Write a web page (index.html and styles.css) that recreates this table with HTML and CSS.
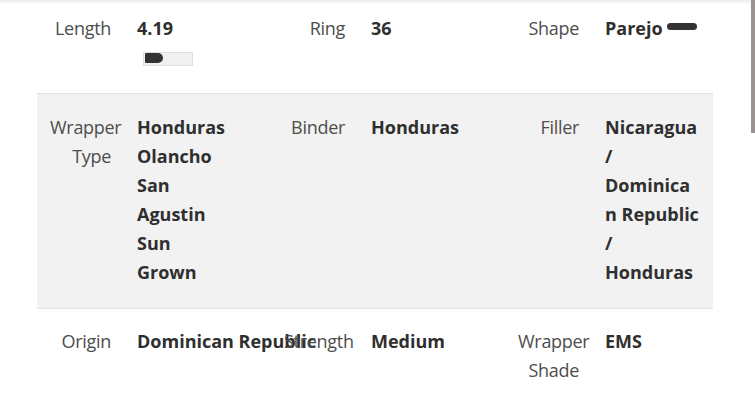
FILE: index.html
```html
<!DOCTYPE html>
<html>
<head>
<meta charset="utf-8">
<link rel="stylesheet" href="styles.css">
</head>
<body>
<div class="topshade"></div>
<div class="specs">
  <div class="row first">
    <div class="cell">
      <div class="label">Length</div>
      <div class="value">4.19
        <div class="lenbar"><div class="lenfill"></div></div>
      </div>
    </div>
    <div class="cell">
      <div class="label">Ring</div>
      <div class="value">36</div>
    </div>
    <div class="cell last">
      <div class="label">Shape</div>
      <div class="value nowrap">Parejo <span class="shape"></span></div>
    </div>
  </div>
  <div class="row alt">
    <div class="cell">
      <div class="label">Wrapper Type</div>
      <div class="value">Honduras Olancho San Agustin Sun Grown</div>
    </div>
    <div class="cell">
      <div class="label">Binder</div>
      <div class="value">Honduras</div>
    </div>
    <div class="cell last">
      <div class="label">Filler</div>
      <div class="value">Nicaragua / Dominican Republic / Honduras</div>
    </div>
  </div>
  <div class="row">
    <div class="cell">
      <div class="label">Origin</div>
      <div class="value nowrap">Dominican Republic</div>
    </div>
    <div class="cell">
      <div class="label">Strength</div>
      <div class="value">Medium</div>
    </div>
    <div class="cell last">
      <div class="label">Wrapper Shade</div>
      <div class="value">EMS</div>
    </div>
  </div>
</div>
<div class="scrollbar"><div class="thumb"></div></div>
</body>
</html>
```
FILE: styles.css
```css
html, body {
  margin: 0;
  padding: 0;
  background: #ffffff;
}
body {
  font-family: "Open Sans", "Liberation Sans", sans-serif;
  font-size: 18px;
  line-height: 29px;
  color: #333;
  overflow: hidden;
  height: 400px;
}
.topshade {
  height: 4px;
  margin-bottom: -4px;
  background: linear-gradient(#ececec, rgba(255,255,255,0));
}
.specs {
  margin-left: 37px;
  width: 676px;
}
.row {
  display: flex;
  padding: 19px 14px 21px 13px;
  border-top: 1px solid #e4e4e4;
}
.row.first {
  border-top: none;
  padding-top: 14px;
  height: 58px;
}
.row.alt {
  background: #f2f2f2;
  border-bottom: 1px solid #e2e2e2;
  padding-bottom: 21px;
}
.row.alt + .row {
  border-top: none;
  padding-top: 18px;
}
.cell {
  flex: 0 0 234px;
  display: flex;
  gap: 26px;
}
.cell.last {
  flex: 1 1 auto;
}
.label {
  flex: 0 0 61px;
  width: 61px;
  text-align: right;
  color: #4d4d4d;
  font-weight: 400;
  letter-spacing: -0.3px;
}
.value {
  flex: 0 0 94px;
  width: 94px;
  font-weight: 700;
  color: #2f2f2f;
  overflow-wrap: anywhere;
}
.nowrap {
  white-space: nowrap;
  overflow-wrap: normal;
}
.lenbar {
  margin: 9px 0 0 6px;
  width: 46px;
  height: 10px;
  border: 1px solid #dedede;
  background: #f0f0f0;
  padding: 1px;
  box-sizing: content-box;
}
.lenfill {
  width: 18px;
  height: 10px;
  margin-top: -1px;
  background: #333;
  border-radius: 1px 5px 5px 1px;
}
.shape {
  display: inline-block;
  width: 30px;
  height: 7px;
  background: #333;
  border-radius: 4px;
  vertical-align: 5px;
}
.scrollbar {
  position: fixed;
  top: 0;
  right: 0;
  width: 4px;
  height: 400px;
}
.thumb {
  height: 133px;
  background: #9a9394;
}
```
